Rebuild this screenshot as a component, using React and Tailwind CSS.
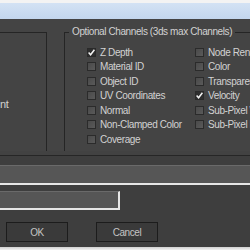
import React from "react";

const leftChannels = [
  { label: "Z Depth", checked: true },
  { label: "Material ID" },
  { label: "Object ID" },
  { label: "UV Coordinates" },
  { label: "Normal" },
  { label: "Non-Clamped Color" },
  { label: "Coverage" },
];

const rightChannels = [
  { label: "Node Render ID" },
  { label: "Color" },
  { label: "Transparency" },
  { label: "Velocity", checked: true },
  { label: "Sub-Pixel Weight" },
  { label: "Sub-Pixel Mask" },
];

const Check = ({ label, checked }) => (
  <div className="h-[14.5px] flex items-center gap-[4px] whitespace-nowrap">
    <span
      className={
        checked
          ? "w-[9px] h-[9px] shrink-0 border border-[#2a2a2a] bg-[#2e2e2e] flex items-center justify-center"
          : "w-[9px] h-[9px] shrink-0 border border-[#2b2b2b] bg-gradient-to-br from-[#4a4a4a] to-[#5a5a5a]"
      }
    >
      {checked && (
        <svg width="7" height="7" viewBox="0 0 7 7">
          <path d="M0.6 3.6 L2.6 5.8 L6.4 0.8" fill="none" stroke="#f2f2f2" strokeWidth="1.5" />
        </svg>
      )}
    </span>
    <span>{label}</span>
  </div>
);

const Button = ({ children }) => (
  <button className="w-[62px] h-[20px] border border-[#1c1c1c] bg-[#3a3a3a] text-[#c4c4c4] flex items-center justify-center">
    {children}
  </button>
);

export default function App() {
  return (
    <div
      className="w-[250px] h-[250px] overflow-hidden flex flex-col text-[10px] tracking-[-0.4px] text-[#d2d2d2]"
      style={{ fontFamily: '"Liberation Sans", Arial, sans-serif' }}
    >
      <div className="h-[3px] bg-[#f3f3f3]" />
      <div className="h-[16px] bg-gradient-to-b from-[#d3e2f4] to-[#c3d6ee]" />

      <div className="h-[132px] bg-[#444444] flex items-start">
        <div className="shrink-0 mt-[13px] w-[47px] h-[120px] border-y border-r border-[#252525] pt-[64px] overflow-hidden">
          <span className="leading-[12px] text-[11px]">nt</span>
        </div>
        <fieldset className="shrink-0 ml-[17px] mt-[7px] h-[126px] w-[220px] border border-r-0 border-[#252525] pl-[22px] pt-[7px]">
          <legend className="ml-[-18px] px-[3px] leading-[12px] text-[#d2d2d2]">
            Optional Channels (3ds max Channels)
          </legend>
          <div className="flex">
            <div className="w-[108px] shrink-0 flex flex-col">
              {leftChannels.map((c, i) => (
                <Check key={i} {...c} />
              ))}
            </div>
            <div className="shrink-0 flex flex-col">
              {rightChannels.map((c, i) => (
                <Check key={i} {...c} />
              ))}
            </div>
          </div>
        </fieldset>
      </div>

      <div className="h-[96px] bg-[#3e3e3e] flex flex-col">
        <div className="h-[4px] bg-[#424242]" />
        <div className="h-[1px] bg-[#262626]" />
        <div className="h-[9px]" />
        <div className="h-[1px] bg-[#6a6a6a]" />
        <div className="h-[17px] bg-[#565656]" />
        <div className="h-[2px] bg-[#e6e6e6]" />
        <div className="h-[6px]" />
        <div className="w-[120px] h-[19px] border-t border-[#6a6a6a] border-b-2 border-r-2 border-b-[#e6e6e6] border-r-[#e6e6e6] bg-[#565656]" />
        <div className="h-[12px]" />
        <div className="h-[20px] flex gap-[28px] pl-[6px]">
          <Button>OK</Button>
          <Button>Cancel</Button>
        </div>
      </div>

      <div className="h-[3px] bg-gradient-to-b from-[#cfcfcf] to-[#f2f2f2]" />
    </div>
  );
}
